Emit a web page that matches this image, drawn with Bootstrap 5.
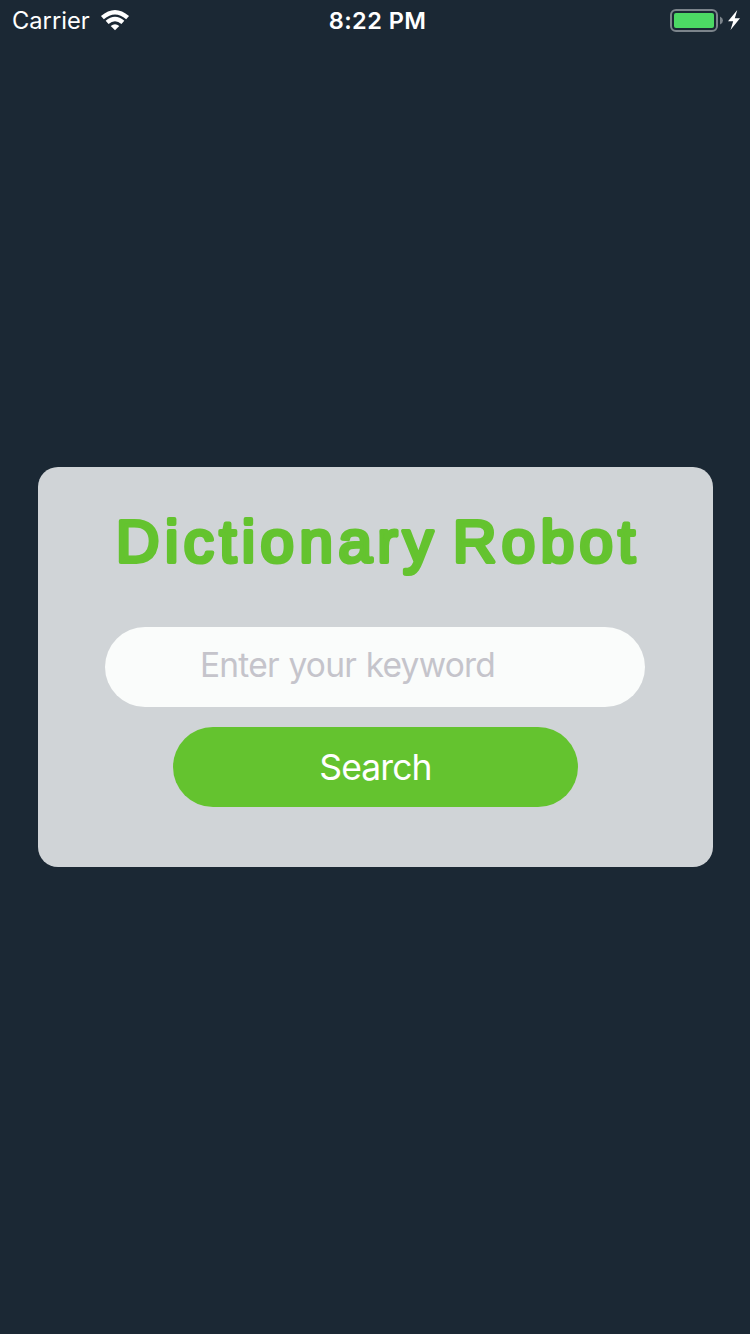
<!DOCTYPE html>
<html lang="en">
<head>
<meta charset="utf-8">
<meta name="viewport" content="width=device-width, initial-scale=1">
<title>Dictionary Robot</title>
<link href="https://cdn.jsdelivr.net/npm/bootstrap@5.3.0/dist/css/bootstrap.min.css" rel="stylesheet">
<style>
  body { background: #1b2834; font-family: Inter, "Liberation Sans", sans-serif; }
  .status-bar { height: 40px; font-size: 24px; line-height: 38px; padding: 0 9px 0 12px; }
  .carrier { font-size: 23.7px; letter-spacing: 0; padding-top: 2px; }
  .clock { font-weight: 600; letter-spacing: .45px; font-size: 23.5px; padding: 2px 0 0 2px; }
  .search-card { width: 675px; height: 400px; background: #d0d4d7; border-radius: 20px; margin: 427px 0 0 1px; }
  .brand-title { height: 160px; }
  .brand-title text { font-family: "Liberation Sans", sans-serif; font-weight: 400; font-size: 60px; fill: #64c32f; stroke: #64c32f; stroke-width: 4.2px; stroke-linejoin: round; }
  .keyword { width: 540px; height: 80px; font-size: 33.5px; padding: 0 96px 4px 95px; margin-right: 1px; letter-spacing: -.78px; word-spacing: 1px; }
  .keyword, .keyword:focus { background: #fafcfb; box-shadow: none; }
  .keyword::placeholder { color: #c5c4cb; opacity: 1; }
  .search-btn { width: 405px; height: 80px; background: #64c32f; font-size: 35.5px; padding: 1px 0 0; margin-top: 20px; letter-spacing: -.9px; }
  .search-btn:hover { background: #5ab528; }
</style>
</head>
<body class="vh-100 overflow-hidden d-flex flex-column">
<header class="status-bar row g-0 text-white flex-shrink-0">
  <div class="col d-flex align-items-center">
    <span class="carrier">Carrier</span>
    <svg class="ms-2" width="34" height="24" viewBox="0 0 34 24" fill="none" aria-label="Wi-Fi">
      <g stroke="#fff" stroke-width="4.4">
        <path d="M4.4 9.6Q17-1.2 29.6 9.6"/>
        <path d="M9.1 14.4Q17 7.5 24.9 14.4"/>
      </g>
      <path d="M12.7 18Q17 14.5 21.3 18L17 22.2Z" fill="#fff"/>
    </svg>
  </div>
  <div class="clock col-auto">8:22 PM</div>
  <div class="col d-flex align-items-center justify-content-end">
    <svg width="72" height="24" viewBox="0 0 72 24" aria-label="Battery charging">
      <rect x="2" y="2" width="46" height="21" rx="5" fill="none" stroke="#7c848b" stroke-width="2"/>
      <rect x="5" y="5" width="40" height="15" rx="2" fill="#4cd964"/>
      <path d="M51 8.5Q54 10 54 12.5T51 16.5Z" fill="#7c848b"/>
      <path d="M68.3 2L59 13.2H64.2L61.5 22L71 10.2H65.8Z" fill="#fff"/>
    </svg>
  </div>
</header>
<main class="search-card align-self-center d-flex flex-column align-items-center">
  <h1 class="brand-title m-0">
    <svg class="d-block" width="675" height="160" viewBox="0 0 675 160">
      <text y="94.6"><tspan x="78" textLength="317">Dictionary</tspan> <tspan x="415" textLength="182">Robot</tspan></text>
    </svg>
  </h1>
  <form class="d-flex flex-column align-items-center">
    <input class="keyword form-control border-0 rounded-pill" type="text" placeholder="Enter your keyword" aria-label="Keyword">
    <button class="search-btn btn border-0 rounded-pill text-white" type="button">Search</button>
  </form>
</main>
<script src="https://cdn.jsdelivr.net/npm/bootstrap@5.3.0/dist/js/bootstrap.bundle.min.js"></script>
</body>
</html>
